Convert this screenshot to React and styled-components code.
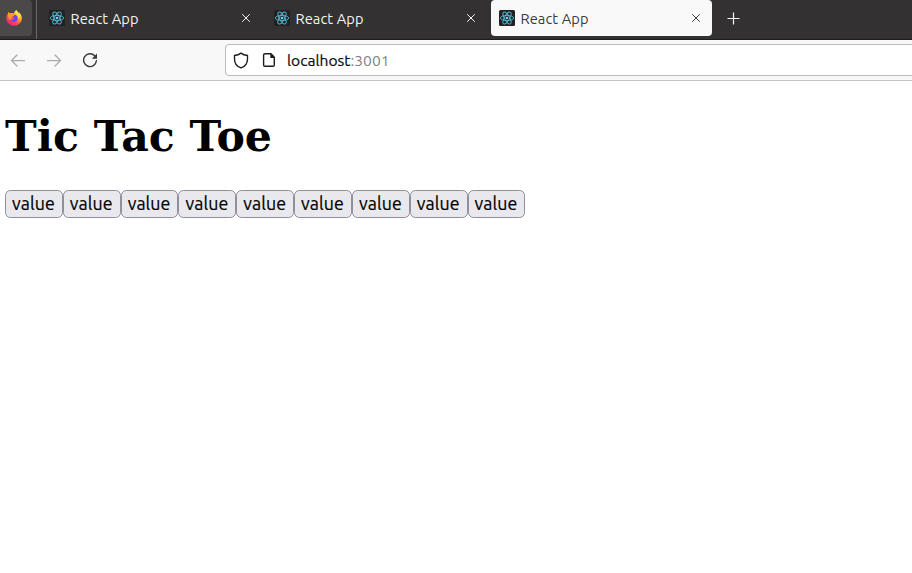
import React from "react";
import styled, { createGlobalStyle } from "styled-components";

const Global = createGlobalStyle`
  * { box-sizing: border-box; }
  html, body { margin: 0; background: #fff; overflow: hidden; }
`;

const uiFont = `"Ubuntu", "Noto Sans", sans-serif`;

const Window = styled.div`
  width: 912px;
  height: 573px;
  overflow: hidden;
  background: #fff;
  font-family: ${uiFont};
`;

const TabStrip = styled.div`
  display: flex;
  align-items: flex-start;
  height: 40px;
  background: #333132;
  border-bottom: 1px solid #1e1d1e;
`;

const PinnedTab = styled.div`
  width: 32px;
  height: 36px;
  padding: 10px 0 0 6px;
  background: #4a4849;
  border-radius: 0 4px 4px 0;
  svg { display: block; }
`;

const Divider = styled.div`
  width: 1px;
  height: 39px;
  margin: 0 4px;
  background: #69686a;
`;

const Tab = styled.div`
  display: flex;
  align-items: center;
  flex: none;
  width: 221px;
  height: 36px;
  margin-right: 4px;
  padding: 0 11px 0 8px;
  border-radius: 4px;
  background: ${(p) => (p.$active ? "#f9f9fa" : "transparent")};
  color: ${(p) => (p.$active ? "#3c3b3d" : "#f4f4f4")};
  svg { flex: none; }
`;

const TabTitle = styled.span`
  flex: 1;
  margin-left: 5.5px;
  padding-top: 1px;
  font-size: 14.67px;
  line-height: 20px;
  letter-spacing: 0.08px;
  white-space: nowrap;
`;

const NewTab = styled.div`
  padding: 12px 0 0 11px;
  svg { display: block; }
`;

const Toolbar = styled.div`
  display: flex;
  align-items: center;
  height: 41px;
  padding-left: 10px;
  background: #f8f8f8;
  border-bottom: 1px solid #c4c4c4;
`;

const NavButton = styled.div`
  flex: none;
  width: 36px;
  height: 16px;
  color: ${(p) => (p.$disabled ? "#ababab" : "#3a3a3a")};
  svg { display: block; }
`;

const AddressBar = styled.div`
  display: flex;
  align-items: center;
  flex: none;
  width: 700px;
  height: 32px;
  margin-left: 107px;
  padding-left: 7px;
  border: 1px solid #bcbcbc;
  border-radius: 4px;
  background: #fff;
  svg { flex: none; margin-right: 12px; }
`;

const Address = styled.span`
  margin-left: -2px;
  padding-bottom: 1px;
  color: #0c0c0d;
  font-size: 15.6px;
  line-height: 20px;
  -webkit-text-stroke: 0.2px #0c0c0d;
`;

const Port = styled.span`
  color: #818181;
  -webkit-text-stroke: 0;
`;

const Page = styled.main`
  padding: 30px 5px 0;
`;

const Heading = styled.h1`
  margin: 0;
  color: #000;
  font: bold 42.6px/50px "DejaVu Serif", serif;
  white-space: nowrap;
`;

const Board = styled.div`
  display: flex;
  margin-top: 29px;
`;

const Square = styled.button`
  width: 57.83px;
  height: 28px;
  flex: none;
  margin: 0;
  padding: 0 1px 1px 0;
  border: 1px solid #8f8f9d;
  border-radius: 5.33px;
  background: #e9e9ed;
  color: #000;
  font: 17.78px/25px ${uiFont};
  letter-spacing: 0.1px;
  -webkit-text-stroke: 0.2px #000;
`;

const FirefoxIcon = () => (
  <svg width="16" height="16" viewBox="0 0 16 16">
    <defs>
      <linearGradient id="flame" x1="0.85" y1="0.1" x2="0.25" y2="0.95">
        <stop offset="0" stopColor="#fff44f" />
        <stop offset="0.35" stopColor="#ffa930" />
        <stop offset="0.65" stopColor="#ff4f4b" />
        <stop offset="1" stopColor="#ed1f80" />
      </linearGradient>
    </defs>
    <path fill="url(#flame)" d="M10.2 0.2c1.3.8 1.9 1.9 2.2 3l.4-.9c2 1.7 3 3.7 3 6 0 4.2-3.4 7.5-7.7 7.5S.3 12.500.3 8.500C.3 6.400 1 4.800 2.100 3.600l.2-1.600 1.500 1.300 1.800-.3c1 0 1.700.2 2.200.5C8.200 2 9 .9 10.200.2Z" />
    <path fill="#ff9a24" d="M2.200 2 4 3.400l1.600-.2C6.500 3.200 7.200 4 7 5L5.200 6.300C4.500 7.800 5 9.600 6.600 10.300 4.300 11 2.300 8.800 2.100 6.300Z" />
    <path fill="#7542e5" d="M7.600 4.700c2.400-.2 4.200 1.400 4.200 3.500 0 2.300-1.700 3.700-3.800 3.700-2 0-3.400-1.200-3.600-3 .8 1 2.600 1.100 3.500.1.400-.5-.300-1.100-1.500-1.200l.2-.8 1.600-1Z" />
    <path fill="#ffe34b" d="M10.200.2c-1.300 2.200.2 3.400 1.300 5 .9 1.400.8 3 .2 4.100 1.700-.9 2.200-3 1.400-5l-.7-1.100c-.300-1.100-.9-2.200-2.200-3Z" />
  </svg>
);

const ReactIcon = () => (
  <svg width="16" height="16" viewBox="0 0 16 16">
    <rect width="16" height="16" rx="1.500" fill="#202123" />
    <g fill="none" stroke="#53b8d0" strokeWidth="0.9">
      <ellipse cx="8" cy="8" rx="6.700" ry="2.600" />
      <ellipse cx="8" cy="8" rx="6.700" ry="2.600" transform="rotate(60 8 8)" />
      <ellipse cx="8" cy="8" rx="6.700" ry="2.600" transform="rotate(120 8 8)" />
    </g>
    <circle cx="8" cy="8" r="1.300" fill="#61dafb" />
  </svg>
);

const CloseIcon = () => (
  <svg width="10" height="10" viewBox="0 0 10 10" fill="none" stroke="currentColor" strokeWidth="1">
    <path d="m1.200 1.200 7.600 7.600M8.800 1.200 1.200 8.800" />
  </svg>
);

const PlusIcon = () => (
  <svg width="14" height="14" viewBox="0 0 14 14" fill="none" stroke="#f7f7f7" strokeWidth="1.200">
    <path d="M6.500.500v12M.500 6.500h12" />
  </svg>
);

const BackIcon = () => (
  <svg width="16" height="16" viewBox="0 0 16 16" fill="none" stroke="currentColor" strokeWidth="1.250" strokeLinecap="round" strokeLinejoin="round">
    <path d="M14.500 8.500h-13M7 3 1.500 8.500 7 14" />
  </svg>
);

const ForwardIcon = () => (
  <svg width="16" height="16" viewBox="0 0 16 16" fill="none" stroke="currentColor" strokeWidth="1.250" strokeLinecap="round" strokeLinejoin="round">
    <path d="M1.500 8.500h13M9 3l5.500 5.500L9 14" />
  </svg>
);

const ReloadIcon = () => (
  <svg width="16" height="16" viewBox="0 0 16 16" fill="none">
    <path d="M12.700 3.800A6.400 6.400 0 1 0 14.400 8.800" stroke="currentColor" strokeWidth="1.400" strokeLinecap="round" />
    <path d="M15 1.500v5.200H9.800Z" fill="currentColor" />
  </svg>
);

const ShieldIcon = () => (
  <svg width="16" height="17" viewBox="0 0 16 17" fill="none" stroke="#1c1c1e" strokeWidth="1.350" strokeLinejoin="round">
    <path d="M8 1.100c1.700 1.300 4 2.100 6.500 2.400v3.400c0 4.300-2.500 7.700-6.500 9-4-1.300-6.500-4.700-6.500-9V3.500C4 3.200 6.300 2.400 8 1.100Z" />
  </svg>
);

const PageIcon = () => (
  <svg width="16" height="16" viewBox="0 0 16 16">
    <path d="M4 1.700h6l3.300 3.600v7.600c0 .9-.5 1.400-1.400 1.400H4c-.9 0-1.400-.5-1.400-1.400V3.100c0-.9.5-1.400 1.400-1.400Z" fill="none" stroke="#1c1c1e" strokeWidth="1.400" strokeLinejoin="round" />
    <path d="M9.300 1.500v4.500h4.500Z" fill="#1c1c1e" />
  </svg>
);

const tabs = [
  { title: "React App" },
  { title: "React App" },
  { title: "React App", active: true },
];

const squares = Array(9).fill("value");

export default function App() {
  return (
    <>
      <Global />
      <Window>
        <TabStrip>
          <PinnedTab><FirefoxIcon /></PinnedTab>
          <Divider />
          {tabs.map((tab, i) => (
            <Tab key={i} $active={tab.active}>
              <ReactIcon />
              <TabTitle>{tab.title}</TabTitle>
              <CloseIcon />
            </Tab>
          ))}
          <NewTab><PlusIcon /></NewTab>
        </TabStrip>
        <Toolbar>
          <NavButton $disabled><BackIcon /></NavButton>
          <NavButton $disabled><ForwardIcon /></NavButton>
          <NavButton><ReloadIcon /></NavButton>
          <AddressBar>
            <ShieldIcon />
            <PageIcon />
            <Address>localhost<Port>:3001</Port></Address>
          </AddressBar>
        </Toolbar>
        <Page>
          <Heading>Tic Tac Toe</Heading>
          <Board>
            {squares.map((value, i) => <Square key={i}>{value}</Square>)}
          </Board>
        </Page>
      </Window>
    </>
  );
}
